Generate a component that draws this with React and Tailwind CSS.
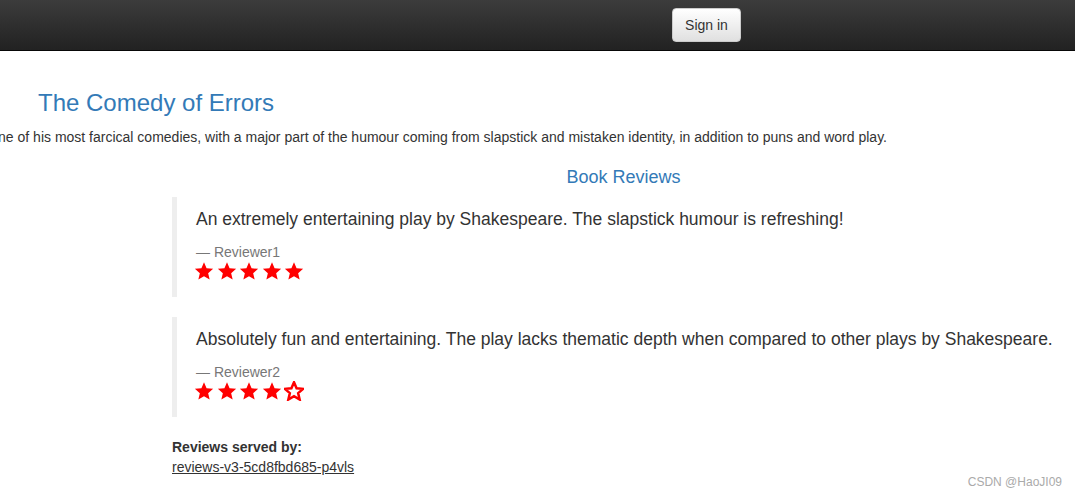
import React from "react";

function Star({ filled }) {
  return (
    <svg width="20" height="20" viewBox="0 0 24 24" className="block">
      <path
        d="M12 1.5l3.09 7.26 7.86.66-5.97 5.16 1.8 7.67L12 18.2l-6.78 4.05 1.8-7.67L1.05 9.42l7.86-.66z"
        fill={filled ? "#ff0000" : "#ffffff"}
        stroke="#ff0000"
        strokeWidth={filled ? 0 : 3}
        strokeLinejoin="miter"
      />
    </svg>
  );
}

function Review({ text, name, stars }) {
  return (
    <blockquote className="border-l-[5px] border-[#eeeeee] pl-[19px] pr-5 py-[10px] mb-5">
      <p className="text-[17.5px] leading-[25px] text-[#333333] whitespace-nowrap">{text}</p>
      <div className="mt-[10px] text-[14px] leading-[20px] text-[#777777]">— {name}</div>
      <div className="flex gap-[2.5px] h-[25px] items-start -ml-[2px] -mt-[1px] mb-[1px]">
        {[0, 1, 2, 3, 4].map((i) => (
          <Star key={i} filled={i < stars} />
        ))}
      </div>
    </blockquote>
  );
}

export default function App() {
  return (
    <div
      className="relative w-[1075px] h-[499px] overflow-hidden bg-white text-[#333333]"
      style={{ fontFamily: '"Liberation Sans", Arial, sans-serif' }}
    >
      <nav className="h-[51px] bg-gradient-to-b from-[#3c3c3c] to-[#222222] border-b border-[#080808] flex items-start">
        <div className="pl-[672px] pt-[8px]">
          <button className="h-[34px] w-[69px] rounded-[4px] border border-[#cccccc] bg-gradient-to-b from-[#ffffff] to-[#e0e0e0] text-[14px] text-[#333333] leading-[20px]">
            Sign in
          </button>
        </div>
      </nav>

      <h3 className="mt-[39px] pl-[38px] text-[24px] leading-[26px] text-[#337ab7]">
        The Comedy of Errors
      </h3>
      <div className="mt-[11px] w-[887px] overflow-hidden flex justify-end">
        <p className="text-[14px] leading-[20px] whitespace-nowrap shrink-0">
          Wikipedia Summary: The Comedy of Errors is one of William Shakespeare's early plays. It is his shortest and one of his most farcical comedies, with a major part of the humour coming from slapstick and mistaken identity, in addition to puns and word play.
        </p>
      </div>

      <div className="pl-[172px] mt-[20px]">
        <h4 className="text-center text-[18px] leading-[20px] text-[#337ab7]">Book Reviews</h4>
        <div className="mt-[10px]">
          <Review
            text="An extremely entertaining play by Shakespeare. The slapstick humour is refreshing!"
            name="Reviewer1"
            stars={5}
          />
          <Review
            text="Absolutely fun and entertaining. The play lacks thematic depth when compared to other plays by Shakespeare."
            name="Reviewer2"
            stars={4}
          />
        </div>
        <dl className="text-[14px] leading-[20px]">
          <dt className="font-bold">Reviews served by:</dt>
          <dd>
            <u>reviews-v3-5cd8fbd685-p4vls</u>
          </dd>
        </dl>
      </div>

      <div className="absolute right-[13px] bottom-[8px] text-[12px] text-[#aaaaaa]">CSDN @HaoJI09</div>
    </div>
  );
}
